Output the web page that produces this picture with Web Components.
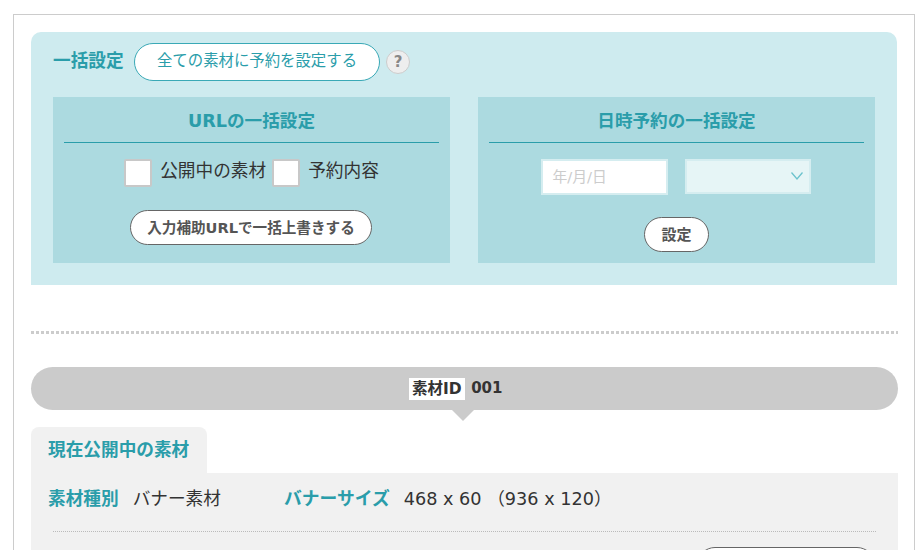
<!DOCTYPE html>
<html lang="ja">
<head>
<meta charset="utf-8">
<title>一括設定</title>
<style>
html, body { margin: 0; padding: 0; height: 550px; overflow: hidden; background: #fff; }
body { font-family: "DejaVu Sans", "Noto Sans CJK JP", sans-serif; color: #333; font-size: 17.67px; }
</style>
</head>
<body>
<app-page>
  <bulk-panel>
    <setting-card slot="left" heading="URLの一括設定">
      <div style="display:flex;align-items:center;justify-content:center;margin-bottom:23px">
        <check-box>公開中の素材</check-box>
        <check-box style="margin-left:6px">予約内容</check-box>
      </div>
      <round-button style="font-size:14.6px;padding:0 16px 2px;margin-right:1px">入力補助URLで一括上書きする</round-button>
    </setting-card>
    <setting-card slot="right" heading="日時予約の一括設定">
      <date-row></date-row>
      <round-button>設定</round-button>
    </setting-card>
  </bulk-panel>
  <dot-line></dot-line>
  <id-pill label="素材ID" value="001"></id-pill>
  <material-tabs></material-tabs>
</app-page>

<script>
class AppPage extends HTMLElement {
    connectedCallback() {
        this.attachShadow({ mode: 'open' });
        this.shadowRoot.innerHTML = `
            <style>
                :host {
                    display: block;
                    box-sizing: border-box;
                    width: 902px;
                    height: 536px;
                    margin: 14px 0 0 13px;
                    padding: 17px 16px 0 17px;
                    border: 1px solid #ccc;
                    border-bottom: 0;
                    overflow: hidden;
                }
            </style>
            <slot></slot>
        `;
    }
}

class BulkPanel extends HTMLElement {
    connectedCallback() {
        this.attachShadow({ mode: 'open' });
        this.shadowRoot.innerHTML = `
            <style>
                :host {
                    display: block;
                    box-sizing: border-box;
                    width: 866px;
                    height: 253px;
                    padding: 11px 22px 0;
                    background: #ceebef;
                    border-radius: 10px 10px 0 0;
                }
                .head { display: flex; align-items: center; height: 38px; margin-bottom: 16px; }
                .title { font-weight: bold; color: #2a9daa; width: 81px; padding-bottom: 6px; }
                .all {
                    box-sizing: border-box;
                    width: 246px;
                    height: 38px;
                    padding-bottom: 6px;
                    display: flex;
                    align-items: center;
                    justify-content: center;
                    background: #fff;
                    border: 1px solid #3aa9b6;
                    border-radius: 19px;
                    color: #2a9daa;
                    font-size: 15.4px;
                }
                .help {
                    box-sizing: border-box;
                    width: 24px;
                    height: 24px;
                    margin-left: 6px;
                    display: flex;
                    align-items: center;
                    justify-content: center;
                    border-radius: 50%;
                    background: #eee;
                    border: 1px solid #ccc;
                    color: #888;
                    font-size: 15px;
                    font-weight: bold;
                }
                .cards { display: flex; justify-content: space-between; }
            </style>
            <div class="head">
                <span class="title">一括設定</span>
                <span class="all">全ての素材に予約を設定する</span>
                <span class="help">?</span>
            </div>
            <div class="cards">
                <slot name="left"></slot>
                <slot name="right"></slot>
            </div>
        `;
    }
}

class SettingCard extends HTMLElement {
    connectedCallback() {
        this.attachShadow({ mode: 'open' });
        this.shadowRoot.innerHTML = `
            <style>
                :host {
                    display: block;
                    box-sizing: border-box;
                    width: 397px;
                    height: 166px;
                    padding: 0 11px;
                    background: #acdae0;
                }
                h3 {
                    box-sizing: border-box;
                    height: 46px;
                    margin: 0 0 15.5px;
                    padding-top: 11px;
                    border-bottom: 1px solid #2a9daa;
                    color: #2a9daa;
                    font-size: 17.6px;
                    line-height: 26px;
                    text-align: center;
                }
                .body { text-align: center; }
            </style>
            <h3>${this.getAttribute('heading')}</h3>
            <div class="body"><slot></slot></div>
        `;
    }
}

class CheckBox extends HTMLElement {
    connectedCallback() {
        this.attachShadow({ mode: 'open' });
        this.shadowRoot.innerHTML = `
            <style>
                :host { display: inline-flex; align-items: center; height: 28px; font-size: 17.67px; color: #333; }
                i {
                    box-sizing: border-box;
                    width: 28px;
                    height: 28px;
                    margin-right: 8px;
                    background: #fff;
                    border: 2px solid #c8c8c8;
                    border-radius: 2px;
                }
                span { line-height: 20px; padding-bottom: 4px; }
            </style>
            <i></i><span><slot></slot></span>
        `;
    }
}

class RoundButton extends HTMLElement {
    connectedCallback() {
        this.attachShadow({ mode: 'open' });
        this.shadowRoot.innerHTML = `
            <style>
                :host {
                    display: inline-flex;
                    box-sizing: border-box;
                    height: 35px;
                    padding: 0 16px 2px;
                    align-items: center;
                    justify-content: center;
                    background: #fff;
                    border: 1px solid #666;
                    border-radius: 18px;
                    color: #555;
                    font-size: 15px;
                    font-weight: bold;
                }
            </style>
            <slot></slot>
        `;
    }
}

class DateRow extends HTMLElement {
    connectedCallback() {
        this.attachShadow({ mode: 'open' });
        this.shadowRoot.innerHTML = `
            <style>
                :host { display: flex; justify-content: center; align-items: flex-start; gap: 17px; margin-bottom: 22px; padding-right: 2px; }
                .field {
                    box-sizing: border-box;
                    width: 127px;
                    height: 36px;
                    padding: 0 0 3px 10px;
                    display: flex;
                    align-items: center;
                    background: #fff;
                    border: 2px solid #d5edf0;
                    color: #ccc;
                    font-size: 14.8px;
                }
                .select {
                    box-sizing: border-box;
                    width: 126px;
                    height: 35px;
                    padding-right: 5px;
                    display: flex;
                    align-items: center;
                    justify-content: flex-end;
                    background: #e6f5f6;
                    border: 2px solid #d5edf0;
                }
                svg { display: block; }
            </style>
            <div class="field">年/月/日</div>
            <div class="select">
                <svg width="14" height="10" viewBox="0 0 14 10"><path d="M1.5 1.5 L7 8 L12.5 1.5" fill="none" stroke="#6cc3cd" stroke-width="1.3"/></svg>
            </div>
        `;
    }
}

class DotLine extends HTMLElement {
    connectedCallback() {
        this.attachShadow({ mode: 'open' });
        this.shadowRoot.innerHTML = `
            <style>
                :host {
                    display: block;
                    width: 867px;
                    height: 3px;
                    margin: 46px 0 33px;
                    background: repeating-linear-gradient(90deg, #ccc 0 3px, transparent 3px 5px);
                }
            </style>
        `;
    }
}

class IdPill extends HTMLElement {
    connectedCallback() {
        this.attachShadow({ mode: 'open' });
        this.shadowRoot.innerHTML = `
            <style>
                :host {
                    display: flex;
                    position: relative;
                    box-sizing: border-box;
                    width: 867px;
                    height: 43px;
                    padding-right: 18px;
                    align-items: center;
                    justify-content: center;
                    gap: 6px;
                    background: #cbcbcb;
                    border-radius: 22px;
                    font-size: 15px;
                    font-weight: bold;
                    color: #333;
                }
                :host::after {
                    content: "";
                    position: absolute;
                    left: 421px;
                    top: 43px;
                    border: 11px solid transparent;
                    border-top-color: #cbcbcb;
                    border-bottom: 0;
                }
                .label { background: #fff; padding: 0 3.5px; line-height: 22px; font-size: 15.5px; }
                .value { padding-bottom: 2px; }
            </style>
            <span class="label">${this.getAttribute('label')}</span>
            <span class="value">${this.getAttribute('value')}</span>
        `;
    }
}

class MaterialTabs extends HTMLElement {
    connectedCallback() {
        this.attachShadow({ mode: 'open' });
        this.shadowRoot.innerHTML = `
            <style>
                :host { display: block; width: 867px; margin-top: 17px; }
                .tab {
                    box-sizing: border-box;
                    width: 176px;
                    height: 46px;
                    padding: 0 0 4px 17px;
                    display: flex;
                    align-items: center;
                    background: #f1f1f1;
                    border-radius: 8px 8px 0 0;
                    color: #2a9daa;
                    font-weight: bold;
                }
                .body { height: 90px; padding: 0 22px; background: #f1f1f1; }
                .row { box-sizing: border-box; display: flex; align-items: center; height: 59px; padding: 0 0 10px 0; border-bottom: 1px dotted #bbb; }
                .row span, .row b { margin-left: 0; }
                .row b:first-child { margin-left: -5px; }
                b { color: #2a9daa; }
                .row .v { margin-left: 14px; color: #333; }
                .row .gap { margin-left: 63px; font-size: 17.8px; }
                .btn {
                    box-sizing: border-box;
                    width: 178px;
                    height: 36px;
                    margin: 15px 1px 0 auto;
                    background: #fff;
                    border: 1px solid #666;
                    border-radius: 18px;
                }
            </style>
            <div class="tab">現在公開中の素材</div>
            <div class="body">
                <div class="row">
                    <b>素材種別</b><span class="v">バナー素材</span>
                    <b class="gap">バナーサイズ</b><span class="v">468 x 60 （936 x 120）</span>
                </div>
                <div class="btn"></div>
            </div>
        `;
    }
}

customElements.define('app-page', AppPage);
customElements.define('bulk-panel', BulkPanel);
customElements.define('setting-card', SettingCard);
customElements.define('check-box', CheckBox);
customElements.define('round-button', RoundButton);
customElements.define('date-row', DateRow);
customElements.define('dot-line', DotLine);
customElements.define('id-pill', IdPill);
customElements.define('material-tabs', MaterialTabs);
</script>
</body>
</html>
